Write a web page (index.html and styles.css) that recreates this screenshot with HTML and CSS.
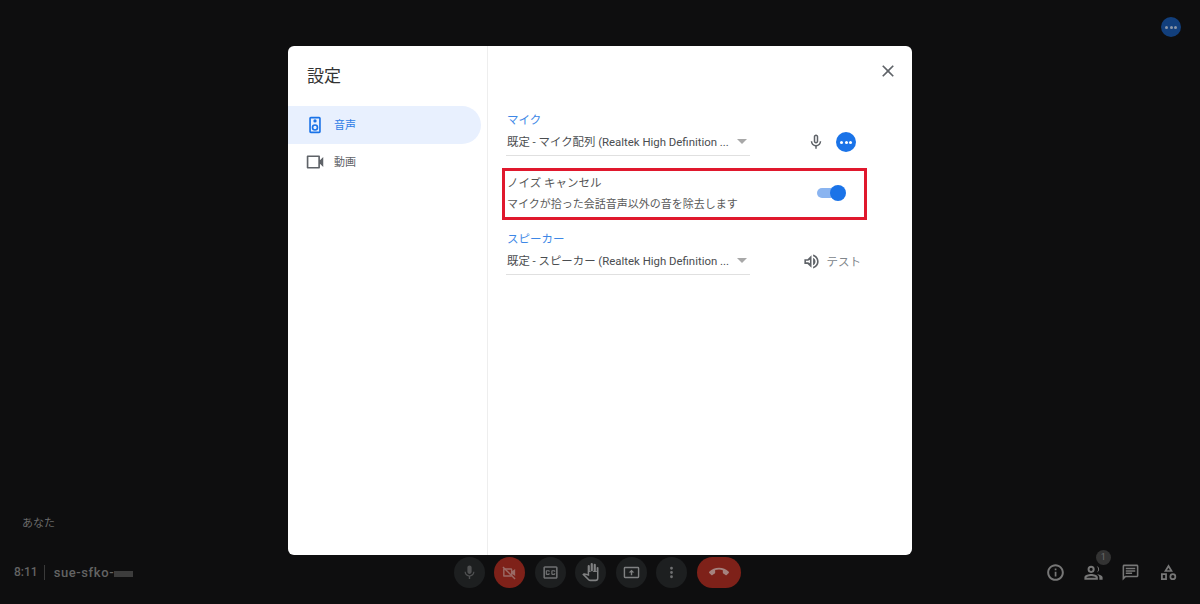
FILE: index.html
```html
<!DOCTYPE html>
<html lang="ja">
<head>
    <meta charset="UTF-8">
    <title>設定</title>
    <link rel="stylesheet" href="styles.css">
</head>
<body>
    <div class="stage">
        <div class="top-badge"><i></i><i></i><i></i></div>
        <div class="you-label">あなた</div>
    </div>

    <div class="toolbar">
        <div class="meeting">
            <span class="clock">8:11</span>
            <span class="meeting-code">sue-sfko-<span class="blur-code"></span></span>
        </div>

        <div class="controls">
            <div class="round-btn">
                <svg viewBox="0 0 24 24" class="ctl-icon dim"><path d="M12 14c1.660 0 3-1.340 3-3V5c0-1.660-1.340-3-3-3S9 3.340 9 5v6c0 1.660 1.340 3 3 3zm5.300-3c0 3-2.540 5.100-5.300 5.100S6.700 14 6.700 11H5c0 3.410 2.720 6.230 6 6.720V21h2v-3.280c3.280-.48 6-3.300 6-6.720h-1.700z"/></svg>
            </div>
            <div class="round-btn red">
                <svg viewBox="0 0 24 24" class="ctl-icon"><path d="M4 6h10a2 2 0 0 1 2 2v2l4-3v10l-4-3v2a2 2 0 0 1-2 2H4a1 1 0 0 1-1-1V7a1 1 0 0 1 1-1zm1 2v8h9V8H5z"/><path d="M3.400 3.400 20.600 20.600l-1.400 1.400L2 4.800z"/></svg>
            </div>
            <div class="round-btn">
                <svg viewBox="0 0 24 24" class="ctl-icon cc"><path d="M19 4H5c-1.110 0-2 .9-2 2v12c0 1.100.89 2 2 2h14c1.100 0 2-.9 2-2V6c0-1.100-.9-2-2-2zm0 14H5V6h14v12zM7 15h3c.55 0 1-.45 1-1v-1H9.500v.5h-2v-3h2v.5H11v-1c0-.55-.45-1-1-1H7c-.55 0-1 .45-1 1v4c0 .55.45 1 1 1zm7 0h3c.55 0 1-.45 1-1v-1h-1.500v.5h-2v-3h2v.5H18v-1c0-.55-.45-1-1-1h-3c-.55 0-1 .45-1 1v4c0 .55.45 1 1 1z"/></svg>
            </div>
            <div class="round-btn">
                <svg viewBox="0 0 24 24" class="ctl-icon hand"><path d="M21 7v12.500a3.500 3.500 0 0 1-3.500 3.500h-6.300c-1 0-2-.4-2.700-1.100L1.500 15l1.300-1.200c.4-.4.900-.5 1.400-.4L8 14.500V5a1.300 1.300 0 0 1 2.600 0v6h1V2.500a1.300 1.300 0 0 1 2.600 0V11h1V3.500a1.300 1.300 0 0 1 2.600 0V11h1V7a1 1 0 0 1 2.200 0zm-1.800 5h-4.800V11h-2.800v.9H9.800v4.900l-5.200-1.400 5.300 5.200c.4.300.8.500 1.300.5h6.300a1.700 1.700 0 0 0 1.700-1.700V12z"/></svg>
            </div>
            <div class="round-btn">
                <svg viewBox="0 0 24 24" class="ctl-icon share"><path d="M3 4h18a2 2 0 0 1 2 2v12a2 2 0 0 1-2 2H3a2 2 0 0 1-2-2V6a2 2 0 0 1 2-2zm0 2v12h18V6H3zm9 2 4 4h-3v4h-2v-4H8l4-4z"/></svg>
            </div>
            <div class="round-btn">
                <svg viewBox="0 0 24 24" class="ctl-icon"><path d="M12 8a2 2 0 1 0 0-4 2 2 0 0 0 0 4zm0 2a2 2 0 1 0 0 4 2 2 0 0 0 0-4zm0 6a2 2 0 1 0 0 4 2 2 0 0 0 0-4z"/></svg>
            </div>
            <div class="hangup">
                <svg viewBox="0 0 24 24" class="hangup-icon"><path d="M12 9c-1.600 0-3.150.25-4.600.72v3.100c0 .39-.23.740-.56.900-.98.490-1.870 1.120-2.660 1.850-.18.180-.43.280-.7.280-.28 0-.53-.11-.71-.29L.29 13.080a.956.956 0 0 1 0-1.350C3.340 8.780 7.460 7 12 7s8.660 1.780 11.710 4.730c.18.180.29.430.29.710 0 .28-.11.530-.29.710l-2.480 2.480c-.18.180-.43.290-.71.290-.27 0-.52-.110-.7-.28-.79-.74-1.690-1.360-2.670-1.850a1 1 0 0 1-.56-.9v-3.100C15.150 9.250 13.600 9 12 9z"/></svg>
            </div>
        </div>

        <div class="side-tools">
            <svg viewBox="0 0 24 24" class="tool-icon"><path d="M11 7h2.200v2.200H11V7zm0 4h2.200v6H11v-6zm1-9.500C6.200 1.500 1.500 6.200 1.500 12S6.200 22.500 12 22.500 22.500 17.800 22.500 12 17.800 1.500 12 1.500zm0 18.500c-4.410 0-8-3.590-8-8s3.590-8 8-8 8 3.590 8 8-3.590 8-8 8z"/></svg>
            <div class="people">
                <span class="people-count">1</span>
                <svg viewBox="0 0 24 24" class="tool-icon"><path d="M9 12.500a4.500 4.500 0 1 0 0-9 4.500 4.500 0 0 0 0 9zm0-6.500a2 2 0 1 1 0 4 2 2 0 0 1 0-4zm0 8c-2.900 0-8.500 1.400-8.500 4.200V21h17v-2.800C17.500 15.400 11.900 14 9 14zm-6 4.500c.3-.8 3.600-2 6-2s5.700 1.200 6 2H3zm13-6.200a4.500 4.500 0 0 0 0-8.600 6.500 6.500 0 0 1 0 8.600zm.5 2c1.600 1 2.900 2.300 2.900 3.900V21h4.100v-2.800c0-2.300-3.800-3.500-7-3.900z"/></svg>
            </div>
            <svg viewBox="0 0 24 24" class="tool-icon"><path d="M20 2H4c-1.100 0-2 .9-2 2v18l4-4h14c1.100 0 2-.9 2-2V4c0-1.100-.9-2-2-2zm0 14H5.200L4 17.200V4h16v12zM6 12h8v2H6v-2zm0-3h12v2H6V9zm0-3h12v2H6V6z"/></svg>
            <svg viewBox="0 0 24 24" class="tool-icon"><path d="M12 1.500 6.300 11h11.400L12 1.500zm0 4.500 1.900 3h-3.800L12 6zM2.500 13H10v8.500H2.500V13zm2.300 2.200v4.100h3v-4.100h-3zM17.500 13a4.250 4.250 0 1 0 0 8.500 4.250 4.250 0 0 0 0-8.500zm0 2.200a2 2 0 1 1 0 4.100 2 2 0 0 1 0-4.100z"/></svg>
        </div>
    </div>

    <div class="dialog">
        <div class="sidebar">
            <h1 class="dialog-title">設定</h1>
            <div class="nav-item active">
                <svg viewBox="0 0 24 24" class="nav-icon"><path d="M17 2H7c-1.100 0-2 .9-2 2v16c0 1.100.9 2 2 2h10c1.100 0 2-.9 2-2V4c0-1.100-.9-2-2-2zm0 18H7V4h10v16zM12 9a2 2 0 1 0 0-4 2 2 0 0 0 0 4zm0 2a4 4 0 1 0 0 8 4 4 0 0 0 0-8zm0 6a2 2 0 1 1 0-4 2 2 0 0 1 0 4z"/></svg>
                <span>音声</span>
            </div>
            <div class="nav-item">
                <svg viewBox="0 0 24 24" class="nav-icon"><path d="M18 10V5a1 1 0 0 0-1-1H3a1 1 0 0 0-1 1v14a1 1 0 0 0 1 1h14a1 1 0 0 0 1-1v-5l4 4V6l-4 4zM16 18H4V6h12v12z"/></svg>
                <span>動画</span>
            </div>
        </div>

        <div class="content">
            <div class="close-row">
                <svg viewBox="0 0 24 24" class="close-icon"><path d="M19 6.410 17.590 5 12 10.590 6.410 5 5 6.410 10.590 12 5 17.590 6.410 19 12 13.410 17.590 19 19 17.590 13.410 12z"/></svg>
            </div>

            <div class="field">
                <div class="field-label">マイク</div>
                <div class="field-row">
                    <div class="select">
                        <span class="select-text">既定 - マイク配列 (Realtek High Definition ...</span>
                        <span class="caret"></span>
                    </div>
                    <div class="field-actions mic-actions">
                        <svg viewBox="0 0 24 24" class="mic-icon"><path d="M12 14c1.660 0 3-1.340 3-3V5c0-1.660-1.340-3-3-3S9 3.340 9 5v6c0 1.660 1.340 3 3 3zm-1-9c0-.55.45-1 1-1s1 .45 1 1v6c0 .55-.45 1-1 1s-1-.45-1-1V5zm6 6c0 2.760-2.240 5-5 5s-5-2.240-5-5H5c0 3.530 2.610 6.430 6 6.920V21h2v-3.080c3.390-.49 6-3.390 6-6.920h-2z"/></svg>
                        <div class="dots-btn"><i></i><i></i><i></i></div>
                    </div>
                </div>
            </div>

            <div class="noise-box">
                <div class="noise-text">
                    <div class="noise-title">ノイズ キャンセル</div>
                    <div class="noise-desc">マイクが拾った会話音声以外の音を除去します</div>
                </div>
                <div class="toggle"><span class="toggle-knob"></span></div>
            </div>

            <div class="field">
                <div class="field-label">スピーカー</div>
                <div class="field-row">
                    <div class="select">
                        <span class="select-text">既定 - スピーカー (Realtek High Definition ...</span>
                        <span class="caret"></span>
                    </div>
                    <div class="field-actions">
                        <svg viewBox="0 0 24 24" class="speaker-icon"><path d="M3 9v6h4l5 5V4L7 9H3zm7 .8v4.400L7.800 13H5v-2h2.800L10 9.800zM14 7.200v9.600c1.800-.8 3-2.700 3-4.800s-1.200-4-3-4.800zM14 3.200v2.100c2.900.9 5 3.500 5 6.700s-2.100 5.800-5 6.700v2.100c4-.9 7-4.500 7-8.800s-3-7.900-7-8.800z"/></svg>
                        <span class="test-label">テスト</span>
                    </div>
                </div>
            </div>
        </div>
    </div>
</body>
</html>
```

FILE: styles.css
```css
html, body {
    height: 100%;
}
body {
    margin: 0;
    background-color: #0e0e0f;
    font-family: Roboto, "Noto Sans CJK JP", sans-serif;
    display: flex;
    flex-direction: column;
    overflow: hidden;
}

/* background call screen */
.stage {
    flex: 1;
    position: relative;
}
.top-badge {
    position: absolute;
    top: 17px;
    right: 19px;
    width: 20px;
    height: 20px;
    border-radius: 50%;
    background-color: #123f7c;
    display: flex;
    align-items: center;
    justify-content: center;
    gap: 1.5px;
}
.top-badge i {
    width: 3px;
    height: 3px;
    border-radius: 50%;
    background-color: #8c97a8;
}
.you-label {
    position: absolute;
    left: 22px;
    bottom: 14px;
    font-size: 11px;
    color: #6a6a6a;
}

.toolbar {
    height: 60px;
    display: grid;
    grid-template-columns: 1fr auto 1fr;
    align-items: center;
    padding: 0 20px 4px 14px;
    box-sizing: border-box;
}
.meeting {
    display: flex;
    align-items: center;
    font-size: 12px;
    font-weight: 500;
    color: #636363;
}
.clock {
    padding-right: 6px;
    border-right: 1px solid #3a3a3a;
    line-height: 15px;
}
.meeting-code {
    padding-left: 9px;
    font-size: 13px;
    letter-spacing: .6px;
}
.blur-code {
    display: inline-block;
    width: 19px;
    height: 6px;
    background-color: #3c3c3c;
}
.controls {
    display: flex;
    align-items: center;
    gap: 9.5px;
}
.round-btn {
    width: 31px;
    height: 31px;
    border-radius: 50%;
    background-color: #1d1f20;
    display: flex;
    align-items: center;
    justify-content: center;
}
.round-btn.red {
    background-color: #7e2119;
}
.ctl-icon {
    width: 17px;
    height: 17px;
    fill: #6f7071;
}
.ctl-icon.dim {
    fill: #505152;
}
.cc {
    width: 19px;
    height: 19px;
}
.hand {
    width: 20px;
    height: 20px;
    fill: #808182;
}
.share {
    fill: #808182;
}
.red .ctl-icon {
    fill: #9a6a65;
}
.hangup {
    width: 44px;
    height: 31px;
    border-radius: 16px;
    background-color: #7e2119;
    display: flex;
    align-items: center;
    justify-content: center;
}
.hangup-icon {
    width: 20px;
    height: 20px;
    fill: #a5827e;
}
.side-tools {
    display: flex;
    align-items: center;
    justify-content: flex-end;
    gap: 18.6px;
    padding-right: 2px;
}
.tool-icon {
    width: 19px;
    height: 19px;
    fill: #777;
    display: block;
}
.people {
    position: relative;
}
.people-count {
    position: absolute;
    top: -13px;
    left: 12px;
    width: 15px;
    height: 15px;
    border-radius: 50%;
    background-color: #333;
    color: #6b6b6b;
    font-size: 9px;
    line-height: 15px;
    text-align: center;
}

/* settings dialog */
.dialog {
    position: absolute;
    left: 288px;
    top: 46px;
    width: 624px;
    height: 509px;
    background-color: #fff;
    border-radius: 6px;
    display: flex;
    overflow: hidden;
}
.sidebar {
    width: 193px;
    padding-right: 6px;
    border-right: 1px solid #eeeeee;
}
.dialog-title {
    margin: 0;
    padding: 19px 0 0 19px;
    height: 41px;
    font-size: 17px;
    font-weight: 400;
    line-height: 22px;
    color: #333;
}
.nav-item {
    height: 35px;
    display: flex;
    align-items: center;
    gap: 10px;
    padding-left: 18px;
    font-size: 11px;
    color: #5f6368;
}
.nav-item.active {
    height: 38px;
    background-color: #e8f0fe;
    border-radius: 0 19px 19px 0;
    color: #2f7de6;
}
.nav-item span {
    position: relative;
    top: -1px;
}
.nav-icon {
    width: 18px;
    height: 18px;
    fill: #5f6368;
    transform: scale(1.1);
}
.active .nav-icon {
    fill: #1a73e8;
}
.content {
    flex: 1;
    padding: 0 51px 0 18px;
}
.close-row {
    height: 66px;
    margin-right: -51px;
    display: flex;
    justify-content: flex-end;
    align-items: flex-start;
    padding: 15px 14px 0 0;
    box-sizing: border-box;
}
.close-icon {
    width: 20px;
    height: 20px;
    fill: #5f6368;
}
.field-label {
    font-size: 11.5px;
    line-height: 16px;
    color: #3d87e6;
    margin-left: 1px;
}
.field-row {
    display: flex;
    align-items: center;
    justify-content: space-between;
}
.select {
    width: 244px;
    height: 29px;
    border-bottom: 1px solid #e0e0e0;
    box-sizing: border-box;
    display: flex;
    align-items: center;
    justify-content: space-between;
    padding: 0 3px 0 1px;
    margin-top: -1px;
}
.select-text {
    font-size: 11.4px;
    color: #4a4d50;
    white-space: nowrap;
}
.caret {
    width: 0;
    height: 0;
    border-left: 5.500px solid transparent;
    border-right: 5.500px solid transparent;
    border-top: 5px solid #a8a8a8;
}
.field-actions {
    display: flex;
    align-items: center;
    gap: 6px;
}
.mic-actions {
    gap: 11px;
    margin-right: 5px;
}
.mic-icon {
    width: 18px;
    height: 18px;
    fill: #5f6368;
}
.dots-btn {
    width: 20px;
    height: 20px;
    border-radius: 50%;
    background-color: #1a73e8;
    display: flex;
    align-items: center;
    justify-content: center;
    gap: 1.5px;
}
.dots-btn i {
    width: 3px;
    height: 3px;
    border-radius: 50%;
    background-color: #fff;
}
.speaker-icon {
    width: 19px;
    height: 19px;
    fill: #5f6368;
}
.test-label {
    font-size: 11.5px;
    color: #80868b;
}
.noise-box {
    margin: 12px -6px 11px -4px;
    height: 52px;
    box-sizing: border-box;
    border: 3px solid #e0182d;
    display: flex;
    align-items: center;
    justify-content: space-between;
    padding: 0 19px 0 2px;
}
.noise-title {
    font-size: 11.5px;
    line-height: 16px;
    color: #555;
    margin-bottom: 6px;
}
.noise-desc {
    font-size: 11px;
    line-height: 16px;
    color: #5a5a5a;
}
.toggle {
    width: 28px;
    height: 10px;
    margin-top: -2px;
    border-radius: 5px;
    background-color: #8ab4f0;
    position: relative;
}
.toggle-knob {
    position: absolute;
    right: -1px;
    top: -3px;
    width: 16px;
    height: 16px;
    border-radius: 50%;
    background-color: #1a73e8;
}
```
